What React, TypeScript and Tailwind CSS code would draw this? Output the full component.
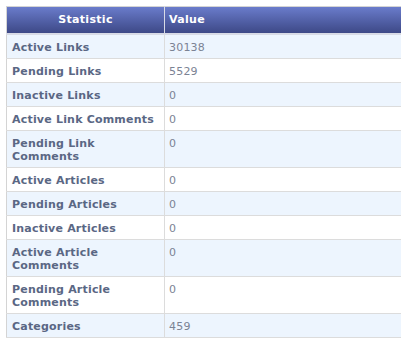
const stats: [string, string][] = [
  ["Active Links", "30138"],
  ["Pending Links", "5529"],
  ["Inactive Links", "0"],
  ["Active Link Comments", "0"],
  ["Pending Link Comments", "0"],
  ["Active Articles", "0"],
  ["Pending Articles", "0"],
  ["Inactive Articles", "0"],
  ["Active Article Comments", "0"],
  ["Pending Article Comments", "0"],
  ["Categories", "459"],
];

// long labels wrap onto a second line after the second word
function Label({ text }: { text: string }) {
  const words = text.split(" ");
  if (words.length < 3) return <>{text}</>;
  return (
    <>
      {words.slice(0, 2).join(" ")}
      <br />
      {words.slice(2).join(" ")}
    </>
  );
}

export default function App() {
  return (
    <div className="min-h-[348px] bg-white pl-[6px] pt-[6px] font-['DejaVu_Sans',Verdana,sans-serif] text-[11px] leading-[13px]">
      <table className="w-[400px] border-collapse border border-[#d4d4d4]">
        <thead>
          <tr className="h-[27px] bg-gradient-to-b from-[#6a7ccb] to-[#3c4785] text-white">
            <th className="w-[158px] border-r border-b-2 border-[#d8dbe6] px-[5px] text-center font-bold tracking-[0.3px]">
              Statistic
            </th>
            <th className="border-b-2 border-[#d8dbe6] px-[4px] text-left font-bold tracking-[0.3px]">Value</th>
          </tr>
        </thead>
        <tbody>
          {stats.map(([label, value], i) => (
            <tr key={label} className={i % 2 === 0 ? "bg-[#edf5fe]" : "bg-white"}>
              <td className="border-r border-b border-[#dcdcdc] px-[5px] pt-[6px] pb-[4px] align-top font-bold tracking-[0.2px] text-[#5a6784]">
                {label.split(" ").length > 2 && label !== "Active Link Comments" ? <Label text={label} /> : label}
              </td>
              <td className="border-b border-[#dcdcdc] px-[4px] pt-[6px] pb-[4px] align-top tracking-[0.2px] text-[#7b8394]">
                {value}
              </td>
            </tr>
          ))}
        </tbody>
      </table>
    </div>
  );
}
